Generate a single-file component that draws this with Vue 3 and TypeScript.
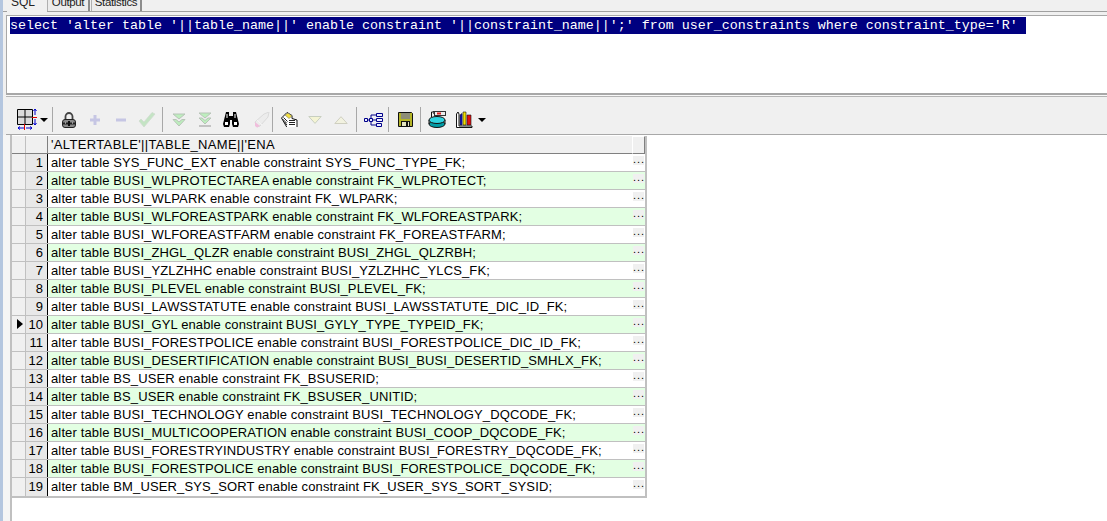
<script setup lang="ts">
const sql = "select 'alter table '||table_name||' enable constraint '||constraint_name||';' from user_constraints where constraint_type='R' "
const rows: string[] = [
  'alter table SYS_FUNC_EXT enable constraint SYS_FUNC_TYPE_FK;',
  'alter table BUSI_WLPROTECTAREA enable constraint FK_WLPROTECT;',
  'alter table BUSI_WLPARK enable constraint FK_WLPARK;',
  'alter table BUSI_WLFOREASTPARK enable constraint FK_WLFOREASTPARK;',
  'alter table BUSI_WLFOREASTFARM enable constraint FK_FOREASTFARM;',
  'alter table BUSI_ZHGL_QLZR enable constraint BUSI_ZHGL_QLZRBH;',
  'alter table BUSI_YZLZHHC enable constraint BUSI_YZLZHHC_YLCS_FK;',
  'alter table BUSI_PLEVEL enable constraint BUSI_PLEVEL_FK;',
  'alter table BUSI_LAWSSTATUTE enable constraint BUSI_LAWSSTATUTE_DIC_ID_FK;',
  'alter table BUSI_GYL enable constraint BUSI_GYLY_TYPE_TYPEID_FK;',
  'alter table BUSI_FORESTPOLICE enable constraint BUSI_FORESTPOLICE_DIC_ID_FK;',
  'alter table BUSI_DESERTIFICATION enable constraint BUSI_BUSI_DESERTID_SMHLX_FK;',
  'alter table BS_USER enable constraint FK_BSUSERID;',
  'alter table BS_USER enable constraint FK_BSUSER_UNITID;',
  'alter table BUSI_TECHNOLOGY enable constraint BUSI_TECHNOLOGY_DQCODE_FK;',
  'alter table BUSI_MULTICOOPERATION enable constraint BUSI_COOP_DQCODE_FK;',
  'alter table BUSI_FORESTRYINDUSTRY enable constraint BUSI_FORESTRY_DQCODE_FK;',
  'alter table BUSI_FORESTPOLICE enable constraint BUSI_FORESTPOLICE_DQCODE_FK;',
  'alter table BM_USER_SYS_SORT enable constraint FK_USER_SYS_SORT_SYSID;',
]
</script>

<template>
  <div class="app">
    <div class="strip"></div>
    <div class="main">
      <div class="tabs">
        <div class="tab active">SQL</div>
        <div class="tab output">Output</div>
        <div class="tab stats">Statistics</div>
      </div>
      <div class="editor"><span class="sel">{{ sql }}</span></div>
      <div class="split"></div>
      <div class="toolbar">
        <span class="btn first">
          <svg width="20" height="22" viewBox="0 0 20 22">
            <path d="M.5.5h15v15H.5z" fill="#dcdcdc" stroke="#000" />
            <path d="M8 .5v15M.5 8h15" stroke="#000" />
            <path d="M18 0v6M16.500 2 18 0l1.500 2M18 10v6M16.500 14l1.500 2 1.500-2M1 19h6M3 17.500 1 19l2 1.500M9 19h6M13 17.500l2 1.500-2 1.500" fill="none" stroke="#0000d0" />
            <path d="M15 8.500h5M7.500 15v6" stroke="#e00000" />
          </svg>
        </span>
        <span class="drop"></span>
        <span class="sep s1"></span>
        <span class="btn">
          <svg width="14" height="16" viewBox="0 0 14 16">
            <path d="M3.500 8V4.500a3.500 3.500 0 0 1 7 0V8" fill="none" stroke="#444" stroke-width="1.800" />
            <rect x=".5" y="7.500" width="13" height="8" rx="2.500" fill="#8a8a8a" stroke="#222" />
            <path d="M1 11.500h12" stroke="#222" stroke-width="2" />
            <rect x="6" y="9" width="2" height="5" fill="#111" />
            <path d="M3 11h1M10 11h1" stroke="#eee" />
          </svg>
        </span>
        <span class="btn">
          <svg width="10" height="10" viewBox="0 0 10 10"><path d="M5 0v10M0 5h10" stroke="#c6c6e4" stroke-width="3" /></svg>
        </span>
        <span class="btn">
          <svg width="10" height="4" viewBox="0 0 10 4"><path d="M0 2h10" stroke="#c6c6e4" stroke-width="3" /></svg>
        </span>
        <span class="btn">
          <svg width="18" height="16" viewBox="0 0 18 16"><path d="M1 9l5 6L17 2l-3-1.500L6 10 3 7z" fill="#c4e4c4" stroke="#cfdccf" stroke-width=".8" /></svg>
        </span>
        <span class="sep"></span>
        <span class="btn">
          <svg width="14" height="14" viewBox="0 0 14 14">
            <path d="M1 1h12L7 6z" fill="#bdeebd" stroke="#b8c4b8" />
            <path d="M1 6.500 4 6.500 7 9l3-2.500h3L7 13z" fill="#bdeebd" stroke="#b8c4b8" />
          </svg>
        </span>
        <span class="btn">
          <svg width="14" height="15" viewBox="0 0 14 15">
            <path d="M1 1h12L7 6z" fill="#bdeebd" stroke="#b8c4b8" />
            <path d="M1 6 4 6 7 8.500 10 6h3L7 12z" fill="#bdeebd" stroke="#b8c4b8" />
            <path d="M1 14h12" stroke="#b4b4b4" stroke-width="1.500" />
          </svg>
        </span>
        <span class="btn">
          <svg width="16" height="15" viewBox="0 0 16 15">
            <path d="M3 0h3v4h4V0h3l3 12-1 3h-5l-1-3V8H7v4l-1 3H1l-1-3z" fill="#000" />
            <path d="M2 10h3v3H2zM11 10h3v3h-3zM3.500 2h1v4h-1zM11.500 2h1v4h-1z" fill="#fff" />
          </svg>
        </span>
        <span class="btn eraser">
          <svg width="16" height="16" viewBox="0 0 16 16">
            <path d="M1 10l9-8 5-2-1 5-8 9-3 1z" fill="#ececec" stroke="#dadada" />
            <path d="M1 10l5 4-3 1.500-2-1.500z" fill="#f0bedc" />
            <path d="M3 8l5 5" stroke="#f4f4f4" />
          </svg>
        </span>
        <span class="sep"></span>
        <span class="btn">
          <svg width="17" height="15" viewBox="0 0 17 15">
            <path d="M.5 6 6 .5l5 3v3l5 1.500v7.500H6z" fill="#fff" stroke="#111" />
            <path d="M4 3l3-2 4 3-3 2.500z" fill="#f4e040" stroke="#776" stroke-width=".6" />
            <path d="M1.500 7l4 4M2.500 5.500l4 4M3.500 10l2.500 3M8 8.500h6M8 10.500h6M8 12.500h6" stroke="#222" />
          </svg>
        </span>
        <span class="btn">
          <svg width="14" height="8" viewBox="0 0 14 8"><path d="M.8.500h12.400L7 7.400z" fill="#f4f4d4" stroke="#c8cfc0" /></svg>
        </span>
        <span class="btn">
          <svg width="14" height="8" viewBox="0 0 14 8"><path d="M.8 7.500h12.400L7 .7z" fill="#f2f2e0" stroke="#cfcfc0" /></svg>
        </span>
        <span class="sep"></span>
        <span class="btn">
          <svg width="19" height="16" viewBox="0 0 19 16">
            <path d="M3 8h4M7 3v10M7 3h5M7 8h5M7 13h5" fill="none" stroke="#00008b" />
            <path d="M.5 6.500h3v3h-3zM12.500 1.500h6v3h-6zM12.500 6.500h6v3h-6zM12.500 11.500h5v3h-5zM5.500 6.500h3v3h-3z" fill="#eef0ff" stroke="#00008b" />
          </svg>
        </span>
        <span class="sep"></span>
        <span class="btn">
          <svg width="15" height="15" viewBox="0 0 15 15">
            <path d="M.5.5h13l1 1v13H.5z" fill="#b4b428" stroke="#111" />
            <rect x="3" y="1" width="9" height="6" fill="#8e8e78" />
            <rect x="3.500" y="9.500" width="8" height="5" fill="#e4e4c0" stroke="#111" />
            <rect x="8" y="10" width="2" height="4" fill="#111" />
          </svg>
        </span>
        <span class="sep"></span>
        <span class="btn">
          <svg width="18" height="17" viewBox="0 0 18 17">
            <path d="M3.500 6V1h3M5 0 7 1 5 2.500" fill="none" stroke="#111" />
            <rect x="6.500" y=".5" width="11" height="4" fill="#eee" stroke="#333" />
            <rect x="9" y="1.500" width="4" height="2" fill="#d22" />
            <ellipse cx="9" cy="13" rx="8" ry="3.500" fill="#009aa4" stroke="#111" />
            <path d="M1 9v4M17 9v4" stroke="#111" />
            <ellipse cx="9" cy="9" rx="8" ry="3.500" fill="#30d4e0" stroke="#111" />
          </svg>
        </span>
        <span class="btn chart">
          <svg width="17" height="17" viewBox="0 0 17 17">
            <path d="M.5 3 2 1l1 2v12h13v1.500H.5z" fill="#fff" stroke="#111" />
            <path d="M4 14V4l2-1.500V14z" fill="#1212d0" stroke="#111" stroke-width=".6" />
            <path d="M7 14V1h3v13z" fill="#f2e000" stroke="#111" stroke-width=".6" />
            <path d="M11 14V4h4v10z" fill="#e01010" stroke="#111" stroke-width=".6" />
          </svg>
        </span>
        <span class="drop"></span>
      </div>
      <div class="results">
        <div class="gutter"></div>
        <div class="grid">
          <div class="head">
            <div class="ind"></div>
            <div class="num"></div>
            <div class="cell htext">'ALTERTABLE'||TABLE_NAME||'ENA</div>
            <div class="hbtn"></div>
          </div>
          <div v-for="(text, i) in rows" :key="i" class="row" :class="{ even: i % 2 === 1 }">
            <div class="ind"><span v-if="i === 9" class="cursor"></span></div>
            <div class="num">{{ i + 1 }}</div>
            <div class="cell">{{ text }}</div>
            <div class="more"><span>...</span></div>
          </div>
        </div>
      </div>
    </div>
  </div>
</template>

<style>
html, body { margin: 0; background: #fff; overflow: hidden; }
</style>

<style scoped>
.app { display: flex; width: 1107px; height: 521px; overflow: hidden; font-family: "Liberation Sans", Arial, sans-serif; font-size: 12px; color: #000; background: #f0f0f0; }
.strip { width: 3px; flex: none; background: #b4c6df; }
.main { flex: 1; display: flex; flex-direction: column; min-width: 0; }
.tabs { height: 11px; flex: none; display: flex; border-bottom: 1px solid #a0a0a0; padding-left: 44px; position: relative; }
.tab { height: 11px; overflow: hidden; line-height: 5px; text-align: center; color: #222; font-size: 11.5px; letter-spacing: -0.35px; box-sizing: border-box; border-right: 2px solid #8c8c8c; border-left: 1px solid #b0b0b0; }
.tab.active { position: absolute; left: 4px; width: 40px; border: 0; background: #f0f0f0; height: 12px; line-height: 5px; text-align: left; padding-left: 4px; letter-spacing: 0; font-size: 12px; }
.output { width: 43px; background: #ececec; }
.stats { width: 51px; margin-left: 1px; background: #ececec; }
.editor { height: 76px; margin: 3px 0 0 3px; flex: none; background: #fff; border-top: 1px solid #a8a8a8; border-left: 1px solid #a8a8a8; padding: 1px 0 0 3px; font-family: "Liberation Mono", monospace; font-size: 13.33px; line-height: 17px; white-space: pre; }
.sel { display: inline-block; background: #000080; color: #fff; height: 17px; }
.split { flex: none; margin-left: 3px; border-top: 2px solid #a8a8a8; border-bottom: 1px solid #b4b4b4; background: #f8f8f8; height: 1px; }
.toolbar { height: 29px; flex: none; margin-left: 3px; display: flex; align-items: center; padding: 8px 0 0 7px; border-bottom: 1px solid #a8a8a8; background: #f0f0f0; }
.btn { width: 26px; height: 24px; flex: none; display: flex; align-items: center; justify-content: center; }
.first { width: 27px; }
.eraser { transform: translateX(5px); }
.chart { width: 28px; }
.drop { width: 0; height: 0; border-left: 4px solid transparent; border-right: 4px solid transparent; border-top: 4px solid #000; flex: none; }
.sep { width: 1px; height: 25px; margin: 0 3px 0 2px; background: #a8a8a8; flex: none; }
.s1 { margin-left: 4px; }
.results { flex: 1; display: flex; background: #fff; min-height: 0; }
.gutter { width: 7px; flex: none; background: #f5f5f5; border-right: 2px solid #c0c0c0; }
.grid { width: 635px; flex: none; margin-top: 1px; border-right: 2px solid #c0c0c0; border-bottom: 2px solid #c0c0c0; box-sizing: border-box; align-self: flex-start; }
.head, .row { display: grid; grid-template-columns: 14px 22px 584px 13px; height: 18px; box-sizing: border-box; }
.head { background: #f0f0f0; border-bottom: 1px solid #808080; }
.row { background: #fff; border-bottom: 1px solid #c0c0c0; }
.row.even { background: #e3ffe3; }
.row:last-child { border-bottom: 0; }
.ind { background: #f0f0f0; border-right: 1px solid #c0c0c0; position: relative; }
.num { background: #e8e8e8; border-right: 1px solid #000; text-align: right; padding-right: 4px; line-height: 17px; font-size: 13px; }
.head .num { background: #f0f0f0; border-right-color: #808080; }
.cell { padding-left: 3px; line-height: 17px; font-size: 13px; white-space: nowrap; overflow: hidden; letter-spacing: 0.13px; }
.htext { letter-spacing: 0.35px; }
.hbtn { border: 1px solid; border-color: #fff #808080 #808080 #fff; box-sizing: border-box; margin-bottom: -1px; }
.more { display: flex; align-items: flex-start; }
.more span { display: block; width: 11px; height: 9px; margin: 2px 0 0 1px; background: #f0f0f0; line-height: 6px; text-align: center; font-size: 11px; letter-spacing: 0.9px; }
.cursor { position: absolute; left: 5px; top: 3px; width: 0; height: 0; border-top: 5px solid transparent; border-bottom: 5px solid transparent; border-left: 6px solid #000; }
</style>
